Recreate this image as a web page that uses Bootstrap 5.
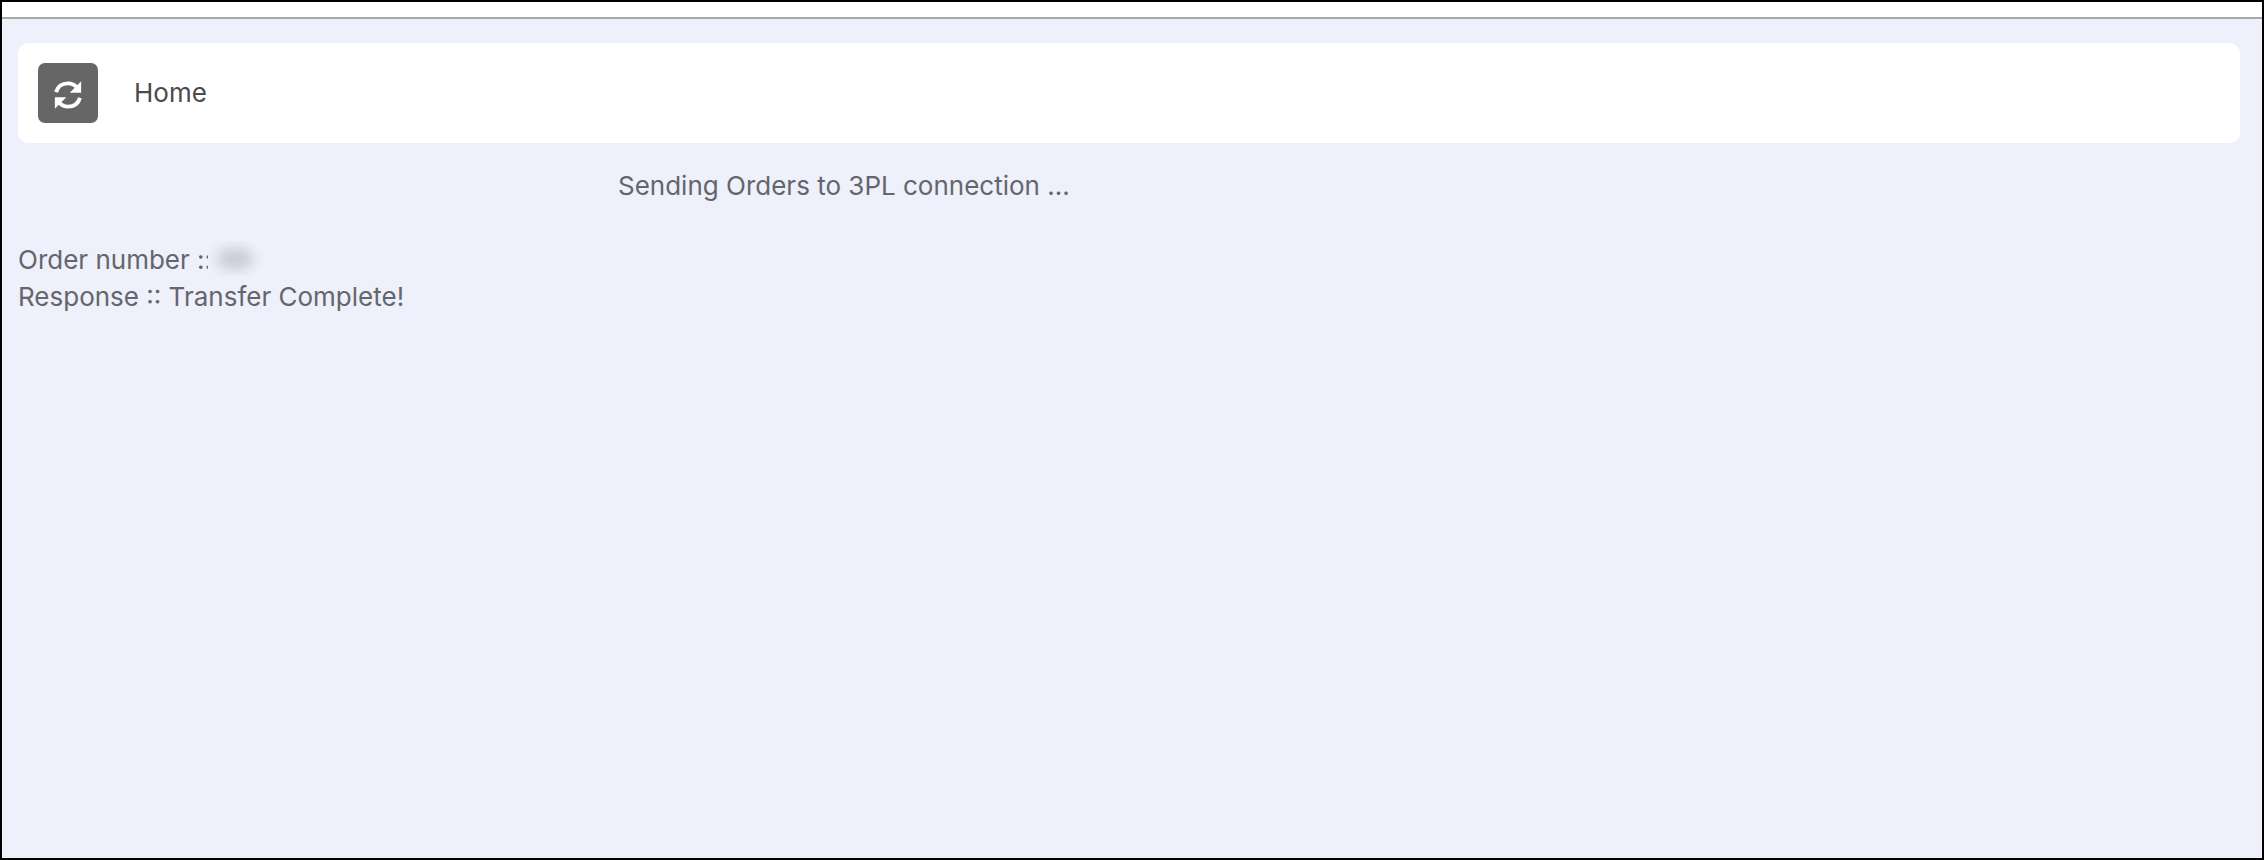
<!DOCTYPE html>
<html lang="en">
<head>
    <meta charset="UTF-8">
    <title>Home</title>
    <link href="https://cdn.jsdelivr.net/npm/bootstrap@5.3.0/dist/css/bootstrap.min.css" rel="stylesheet">
    <style>
        html, body { height: 100%; }
        body { background: #000; font-family: Inter, "Liberation Sans", sans-serif; font-size: 26px; line-height: 37px; color: #65666b; }
        .frame { height: 860px; border: 2px solid #000; background: #eef0fb; }
        .top-strip { height: 17px; background: #fff; border-bottom: 2px solid #a8a8a8; }
        .home-bar { margin: 24px 22px 0 16px; height: 100px; padding: 0 20px; background: #fff; border-radius: 10px; }
        .refresh-btn { width: 60px; height: 60px; background: #666; border-radius: 7px; }
        .refresh-btn svg { margin-top: 4px; }
        .home-label { margin: 0 0 2px 36px; color: #4a4a4f; }
        .status-line { margin: 24px 0 0 616px; }
        .result-lines { margin: 37px 0 0 16px; }
        .blur-wrap { display: inline-block; width: 68px; height: 35px; margin-left: -4px; vertical-align: top; background: #f0f2fb; overflow: hidden; }
        .blur-blob { display: block; width: 38px; height: 22px; margin: 7px 0 0 8px; background: #c8c9d2; border-radius: 50%; filter: blur(7px); }
    </style>
</head>
<body>
    <div class="frame">
        <div class="top-strip"></div>
        <div class="home-bar d-flex align-items-center">
            <div class="refresh-btn d-flex align-items-center justify-content-center">
                <svg width="32" height="32" viewBox="0 0 28 28" fill="none" stroke="#fff" stroke-width="3.4">
                    <path d="M3.5 11.500C5 6.500 9 3.800 14 3.800c3.400 0 6 1.400 8 3.800"/>
                    <path d="M24.500 16.500c-1.500 5-5.500 7.700-10.500 7.700-3.400 0-6-1.400-8-3.800"/>
                    <path d="M25.500 2v10h-10z" fill="#fff" stroke="none"/>
                    <path d="M2.500 26V16h10z" fill="#fff" stroke="none"/>
                </svg>
            </div>
            <span class="home-label">Home</span>
        </div>
        <div class="status-line">Sending Orders to 3PL connection ...</div>
        <div class="result-lines">
            <div class="d-flex">Order number ::<span class="blur-wrap"><span class="blur-blob"></span></span></div>
            <div>Response :: Transfer Complete!</div>
        </div>
    </div>
    <script src="https://cdn.jsdelivr.net/npm/bootstrap@5.3.0/dist/js/bootstrap.bundle.min.js"></script>
</body>
</html>
